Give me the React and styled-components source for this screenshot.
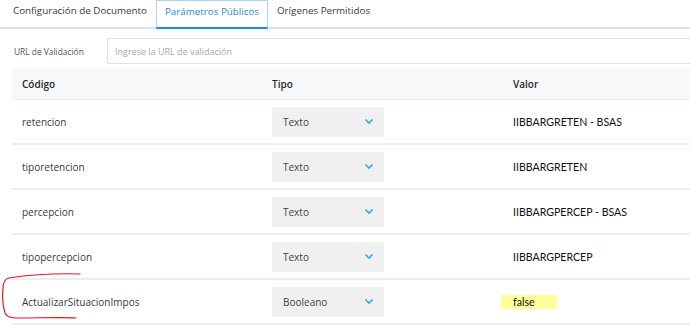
import React from "react";
import styled, { createGlobalStyle } from "styled-components";

const GlobalStyle = createGlobalStyle`
  body {
    margin: 0;
    background: #fff;
    font-family: "Open Sans", "Noto Sans", sans-serif;
    color: #333;
  }
`;

const rows = [
  { code: "retencion", type: "Texto", value: "IIBBARGRETEN - BSAS" },
  { code: "tiporetencion", type: "Texto", value: "IIBBARGRETEN" },
  { code: "percepcion", type: "Texto", value: "IIBBARGPERCEP - BSAS" },
  { code: "tipopercepcion", type: "Texto", value: "IIBBARGPERCEP" },
  { code: "ActualizarSituacionImpos", type: "Booleano", value: "false", marked: true },
];

const Chevron = () => (
  <svg width="10" height="7" viewBox="0 0 10 7">
    <path d="M1.5 1.5 L5 5 L8.5 1.5" fill="none" stroke="#1cb5ea" strokeWidth="1.6" />
  </svg>
);

const App = () => {
  return (
    <Page>
      <GlobalStyle />
      <Tabs>
        <Tab>Configuración de Documento</Tab>
        <Tab active>Parámetros Públicos</Tab>
        <Tab>Orígenes Permitidos</Tab>
      </Tabs>
      <UrlRow>
        <UrlLabel>URL de Validación</UrlLabel>
        <UrlInput placeholder="Ingrese la URL de validación" />
      </UrlRow>
      <Table>
        <HeadRow>
          <CodeCell>Código</CodeCell>
          <TypeCell>Tipo</TypeCell>
          <ValueCell>Valor</ValueCell>
        </HeadRow>
        {rows.map((r) => (
          <Row key={r.code}>
            <CodeCell>
              <CodeText>{r.code}</CodeText>
            </CodeCell>
            <TypeCell>
              <Select>
                <span>{r.type}</span>
                <Chevron />
              </Select>
            </TypeCell>
            <ValueCell>
              <Value marked={r.marked}>{r.value}</Value>
            </ValueCell>
          </Row>
        ))}
        <Mark width="90" height="50" viewBox="0 0 90 50">
          <path
            d="M80 1 C55 0 25 2 9 5 C4 6 3 10 3 16 C2 26 3 34 5 40 C7 44 10 45 20 45 C40 45 60 44 76 45"
            fill="none"
            stroke="#e8151b"
            strokeWidth="1.2"
            strokeLinecap="round"
          />
        </Mark>
      </Table>
    </Page>
  );
};

export default App;

const Page = styled.div`
  width: 690px;
  height: 329px;
  overflow: hidden;
`;

const Tabs = styled.div`
  display: flex;
  height: 29px;
  border-bottom: 2px solid #dfe3e8;
  box-sizing: border-box;
  padding-left: 4px;
`;

const Tab = styled.div`
  height: 29px;
  box-sizing: border-box;
  padding: 4px 8px 0;
  font-size: 9.8px;
  line-height: 14px;
  color: ${(p) => (p.active ? "#1a8ae5" : "#3a3a3a")};
  border: 1px solid ${(p) => (p.active ? "#a9d3f3" : "transparent")};
  border-bottom: 2px solid ${(p) => (p.active ? "#1a8ae5" : "transparent")};
  border-top: ${(p) => (p.active ? "1px solid #a9d3f3" : "none")};
`;

const UrlRow = styled.div`
  display: flex;
  align-items: center;
  height: 40px;
  padding: 9px 0 5px 14px;
  box-sizing: border-box;
`;

const UrlLabel = styled.div`
  width: 93px;
  font-size: 8.4px;
  color: #555;
`;

const UrlInput = styled.input`
  flex: 1;
  height: 26px;
  box-sizing: border-box;
  border: 1px solid #dcdfe3;
  border-right: none;
  border-radius: 3px 0 0 3px;
  padding: 0 7px;
  font-family: "Open Sans", sans-serif;
  font-size: 9px;
  outline: none;
  &::placeholder {
    color: #a8a8a8;
  }
`;

const Table = styled.div`
  position: relative;
  margin-left: 12px;
`;

const Row = styled.div`
  display: grid;
  grid-template-columns: 260px 241px 1fr;
  align-items: center;
  height: 45px;
  border-bottom: 2px solid #eeeeee;
  box-sizing: border-box;
  font-size: 10px;
  color: #3a3a3a;
`;

const HeadRow = styled(Row)`
  height: 31px;
  background: #f7f8fa;
  border-bottom: 1px solid #eceef1;
  font-weight: 600;
  color: #2a2a2a;
`;

const CodeCell = styled.div`
  padding-left: 10px;
`;

const CodeText = styled.div`
  width: 113px;
  white-space: nowrap;
`;

const TypeCell = styled.div`
  padding-left: 0;
`;

const ValueCell = styled.div`
  padding-left: 0;
`;

const Select = styled.div`
  width: 112px;
  height: 30px;
  box-sizing: border-box;
  background: #f0f0f0;
  display: flex;
  align-items: center;
  justify-content: space-between;
  padding: 0 10px 0 11px;
  font-size: 10px;
  color: #444;
`;

const Value = styled.span`
  font-family: "Lato", "Carlito", sans-serif;
  font-size: 10.6px;
  color: #111;
  ${(p) =>
    p.marked &&
    `
    background: #ffff99;
    padding: 1px 22px 1px 12px;
    margin-left: -12px;
  `}
`;

const Mark = styled.svg`
  position: absolute;
  left: -12px;
  bottom: 2px;
`;
